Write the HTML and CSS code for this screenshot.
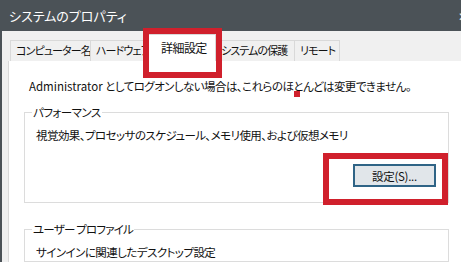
FILE: index.html
```html
<!DOCTYPE html>
<html lang="ja">
<head>
  <meta charset="UTF-8" />
  <meta name="viewport" content="width=device-width, initial-scale=1" />
  <title>システムのプロパティ</title>
  <link rel="stylesheet" href="styles.css">
</head>
<body>

  <div class="window">
    <!-- Title bar -->
    <div class="titlebar">
      <span class="title">システムのプロパティ</span>
      <span class="close">✕</span>
    </div>

    <!-- Tabs -->
    <div class="tabs">
      <div class="tab tab-computer">コンピューター名</div>
      <div class="tab tab-hardware">ハードウェア</div>
      <div class="tab tab-advanced active">詳細設定</div>
      <div class="tab tab-protect">システムの保護</div>
      <div class="tab tab-remote">リモート</div>
    </div>

    <!-- Tab page -->
    <div class="page">
      <p class="notice"><span class="latin">Administrator </span>としてログオンしない場合は、これらのほとんどは変更できません。</p>

      <fieldset class="group group-perf">
        <legend>パフォーマンス</legend>
        <p class="group-text">視覚効果、プロセッサのスケジュール、メモリ使用、および仮想メモリ</p>
        <div class="group-actions">
          <button type="button" class="btn">設定(S)...</button>
        </div>
      </fieldset>

      <fieldset class="group group-profile">
        <legend>ユーザー プロファイル</legend>
        <p class="group-text">サインインに関連したデスクトップ設定</p>
      </fieldset>
    </div>
  </div>

  <!-- Annotation marks -->
  <div class="mark mark-tab"></div>
  <div class="mark mark-button"></div>
  <div class="dot"></div>

</body>
</html>
```

FILE: styles.css
```css
/* Colors */
:root {
  --title-bg: #4b5257;
  --face: #f0f0f0;
  --line: #d9d9d9;
  --text: #111;
  --mark: #d0202c;
}

* {
  box-sizing: border-box;
  font-family: "Noto Sans CJK JP", "Noto Sans", sans-serif;
  font-feature-settings: "palt";
}

body {
  margin: 0;
  width: 461px;
  height: 262px;
  overflow: hidden;
  background: var(--face);
  color: var(--text);
  position: relative;
  font-size: 11.5px;
  letter-spacing: -0.55px;
}

/* Window frame */
.window {
  height: 262px;
  border-left: 2px solid var(--title-bg);
  background: var(--face);
}

.titlebar {
  height: 31px;
  background: var(--title-bg);
  color: #fff;
  display: flex;
  align-items: center;
  justify-content: space-between;
  padding-left: 7px;
}

.title {
  font-size: 13px;
  letter-spacing: 0;
}

.close {
  font-size: 12px;
  font-weight: 300;
  color: #e8e8e8;
  margin-right: -6px;
}

/* Tabs */
.tabs {
  height: 30px;
  display: flex;
  align-items: flex-end;
  padding-left: 8px;
}

.tab {
  height: 21px;
  line-height: 19px;
  padding-left: 5px;
  font-size: 11px;
  letter-spacing: -0.9px;
  border: 1px solid var(--line);
  border-bottom: none;
  border-left: none;
  background: var(--face);
  white-space: nowrap;
  overflow: hidden;
}

.tab-computer {
  width: 81px;
  border-left: 1px solid var(--line);
}

.tab-hardware { width: 58px; }
.tab-protect { width: 79px; }
.tab-remote { width: 45px; }

.tab.active {
  width: 68px;
  height: 27px;
  line-height: 25px;
  padding-left: 12px;
  font-size: 12px;
  letter-spacing: -0.55px;
  background: #fff;
  margin-left: -1px;
  border-left: 1px solid var(--line);
}

/* Tab page */
.page {
  height: 201px;
  background: #fff;
  border-left: 1px solid var(--line);
  margin-left: 6px;
  padding: 16px 12px 0 15px;
}

.notice {
  margin: 0 0 0 5px;
  line-height: 18px;
}

.latin {
  letter-spacing: 0;
}

/* Group boxes */
.group {
  margin: 0;
  border: 1px solid #dcdcdc;
  padding: 0 12px 0 11px;
}

.group legend {
  line-height: 16px;
  padding: 0 1px;
  margin-left: -4px;
}

.group-profile legend {
  letter-spacing: -0.8px;
}

.group-perf {
  margin-top: 9px;
  height: 99px;
}

.group-profile {
  margin-top: 18px;
}

.group-text {
  margin: 6px 0 0;
  line-height: 18px;
}

.group-actions {
  display: flex;
  justify-content: flex-end;
  margin-top: 20px;
}

.btn {
  width: 83px;
  height: 23px;
  border: 2px solid #2f6486;
  background: #e1e6ea;
  font-size: 11.5px;
  letter-spacing: -0.3px;
  color: var(--text);
  padding: 0;
}

/* Red annotation boxes laid over the dialog */
.mark {
  position: absolute;
  border: 6px solid var(--mark);
}

.mark-tab {
  left: 143px;
  top: 28px;
  width: 79px;
  height: 50px;
}

.mark-button {
  left: 323px;
  top: 153px;
  width: 125px;
  height: 52px;
}

.dot {
  position: absolute;
  left: 294px;
  top: 91px;
  width: 6px;
  height: 6px;
  background: var(--mark);
}
```
